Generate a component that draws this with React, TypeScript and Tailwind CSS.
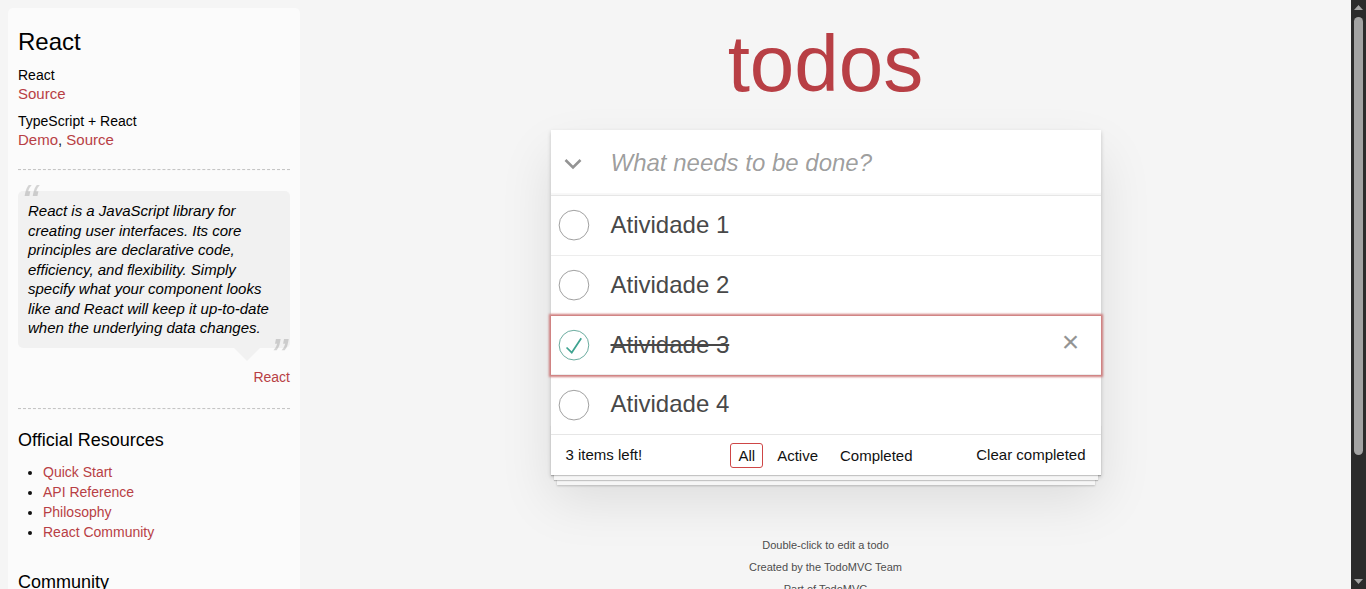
import type { ReactNode } from "react";

const linkColor = "text-[#b83f45]";

const todos = [
  { id: 1, title: "Atividade 1", completed: false },
  { id: 2, title: "Atividade 2", completed: false },
  { id: 3, title: "Atividade 3", completed: true },
  { id: 4, title: "Atividade 4", completed: false },
];

const Rule = ({ className = "" }: { className?: string }) => (
  <hr
    className={`h-0 border-x-0 border-t border-b border-dashed border-t-[#c5c5c5] border-b-[#f7f7f7] ${className}`}
  />
);

const Link = ({ children }: { children: ReactNode }) => (
  <a href="#" className={linkColor}>
    {children}
  </a>
);

const Toggle = ({ checked }: { checked: boolean }) => (
  <svg width="40" height="40" viewBox="-10 -18 100 135" className="shrink-0 self-center">
    <circle
      cx="50"
      cy="50"
      r="50"
      fill="none"
      stroke={checked ? "#59A193" : "#949494"}
      strokeWidth="3"
    />
    {checked && <path fill="#3EA390" d="M72 25L42 71 27 56l-4 4 20 20 34-52z" />}
  </svg>
);

const Sidebar = () => (
  <aside className="mt-2 ml-2 w-[292px] shrink-0 self-start rounded-[5px] bg-[#fbfbfb] p-2.5 text-[14px] leading-[19.6px] text-[#111]">
    <header>
      <h3 className="my-2.5 text-[24px] leading-[1.2] text-black">React</h3>
      <div>
        <h5 className="mt-2.5 text-[14px] leading-[1.2] text-black">React</h5>
        <p className="text-[15px] leading-[1.3]">
          <Link>Source</Link>
        </p>
        <h5 className="mt-2.5 text-[14px] leading-[1.2] text-black">TypeScript + React</h5>
        <p className="text-[15px] leading-[1.3]">
          <Link>Demo</Link>, <Link>Source</Link>
        </p>
      </div>
    </header>
    <Rule className="my-5" />
    <blockquote>
      <div className="relative rounded-[5px] bg-[rgba(0,0,0,0.04)] p-2.5">
        <p className="text-[15px] leading-[1.3] text-black italic">
          React is a JavaScript library for creating user interfaces. Its core principles are
          declarative code, efficiency, and flexibility. Simply specify what your component looks
          like and React will keep it up-to-date when the underlying data changes.
        </p>
        <span className="absolute -top-5 left-[3px] text-[50px] leading-[1.3] text-black italic opacity-15">
          “
        </span>
        <span className="absolute right-[3px] -bottom-[42px] text-[50px] leading-[1.3] text-black italic opacity-15">
          ”
        </span>
        <span className="absolute top-full right-[30px] border-[13px] border-transparent border-t-[rgba(0,0,0,0.04)]" />
      </div>
      <footer className="mt-[19px] text-right leading-5">
        <Link>React</Link>
      </footer>
    </blockquote>
    <Rule className="mt-[21px] mb-5" />
    <h4 className="mt-2.5 mb-[11px] text-[18px] leading-[1.2] text-black">Official Resources</h4>
    <ul className="mb-[30px] ml-[25px] list-disc">
      {["Quick Start", "API Reference", "Philosophy", "React Community"].map((l) => (
        <li key={l} className="leading-5">
          <Link>{l}</Link>
        </li>
      ))}
    </ul>
    <h4 className="my-2.5 text-[18px] leading-[1.2] text-black">Community</h4>
    <ul className="mb-[30px] ml-[25px] list-disc">
      <li className="leading-5">
        <Link>ReactJS on Stack Overflow</Link>
      </li>
    </ul>
    <footer>
      <Rule className="my-5" />
      <em>
        If you have other helpful links to share, or find any of the links above no longer work,
        please <Link>let us know</Link>.
      </em>
    </footer>
  </aside>
);

const TodoApp = () => (
  <section className="relative bg-white shadow-[0_2px_4px_0_rgba(0,0,0,0.2),0_25px_50px_0_rgba(0,0,0,0.1)]">
    <header className="flex h-[65px] shadow-[inset_0_-2px_1px_rgba(0,0,0,0.03)]">
      <label className="flex w-[45px] shrink-0 items-center justify-center pt-[3px]">
        <svg width="20" height="12" viewBox="0 0 20 12">
          <path d="M2.5 2 L10 9.5 L17.5 2" fill="none" stroke="#949494" strokeWidth="2.6" />
        </svg>
      </label>
      <input
        className="min-w-0 flex-1 bg-transparent py-4 pr-4 pl-[15px] text-[24px] text-[#484848] outline-none placeholder:text-[rgba(0,0,0,0.4)] placeholder:italic"
        placeholder="What needs to be done?"
      />
    </header>
    <ul className="relative border-t border-[#e6e6e6]">
      {todos.map((t, i) => (
        <li
          key={t.id}
          className={`flex bg-white ${i < todos.length - 1 ? "border-b border-[#ededed]" : ""} ${
            t.completed ? "relative z-10 shadow-[0_0_2px_2px_#CF7D7D]" : ""
          }`}
        >
          <Toggle checked={t.completed} />
          <label
            className={`ml-5 flex-1 py-[15px] pr-[15px] text-[24px] leading-[1.2] text-[#484848] ${
              t.completed ? "line-through" : ""
            }`}
          >
            {t.title}
          </label>
          {t.completed && (
            <button className="mr-[10px] flex h-10 w-10 items-start justify-center self-center text-[30px] leading-[1.1] text-[#949494]">
              ×
            </button>
          )}
        </li>
      ))}
    </ul>
    <div className="pointer-events-none absolute inset-x-0 bottom-0 h-[50px] shadow-[0_1px_1px_rgba(0,0,0,0.2),0_8px_0_-3px_#f6f6f6,0_9px_1px_-3px_rgba(0,0,0,0.2),0_16px_0_-6px_#f6f6f6,0_17px_2px_-6px_rgba(0,0,0,0.2)]" />
    <footer className="relative grid h-[41px] grid-cols-[1fr_auto_1fr] items-center border-t border-[#e6e6e6] px-[15px] text-[15px] leading-5 text-[#111]">
      <span>
        <strong className="font-normal">3</strong> items left!
      </span>
      <ul className="flex items-center">
        {["All", "Active", "Completed"].map((f) => (
          <li key={f}>
            <a
              href="#"
              className={`m-[3px] block rounded-[3px] border px-[7px] py-[3px] leading-[17px] ${
                f === "All" ? "border-[#CE4646]" : "border-transparent"
              }`}
            >
              {f}
            </a>
          </li>
        ))}
      </ul>
      <button className="justify-self-end leading-5">Clear completed</button>
    </footer>
  </section>
);

// window scrollbar, drawn because the page is shown clipped at the viewport
const Scrollbar = () => (
  <div className="flex h-full w-[15px] shrink-0 flex-col bg-[#2b2b2b]">
    <div className="flex h-[15px] items-center justify-center">
      <svg width="9" height="5" viewBox="0 0 9 5">
        <path d="M4.5 0L9 5H0z" fill="#a3a3a3" />
      </svg>
    </div>
    <div className="flex-1 px-[3px] pt-[2px]">
      <div className="h-[438px] rounded-full bg-[#a3a3a3]" />
    </div>
    <div className="flex h-[15px] items-center justify-center">
      <svg width="9" height="5" viewBox="0 0 9 5">
        <path d="M0 0H9L4.5 5z" fill="#a3a3a3" />
      </svg>
    </div>
  </div>
);

export default function App() {
  return (
    <div className="flex h-screen overflow-hidden bg-[#f5f5f5] font-['Liberation_Sans',Arial,sans-serif]">
      <div className="flex min-w-0 flex-1 items-start">
        <Sidebar />
        <main className="min-w-0 flex-1">
          <div className="mx-auto w-[550px]">
            <h1 className="h-[130px] pt-[16px] text-center text-[80px] leading-[96px] font-normal text-[#b83f45]">
              todos
            </h1>
            <TodoApp />
            <footer className="mt-[65px] flex flex-col gap-[11px] pb-[11px] text-center text-[11px] leading-none text-[#4d4d4d] [text-shadow:0_1px_0_rgba(255,255,255,0.5)]">
              <p>Double-click to edit a todo</p>
              <p>Created by the TodoMVC Team</p>
              <p>Part of TodoMVC</p>
            </footer>
          </div>
        </main>
      </div>
      <Scrollbar />
    </div>
  );
}
